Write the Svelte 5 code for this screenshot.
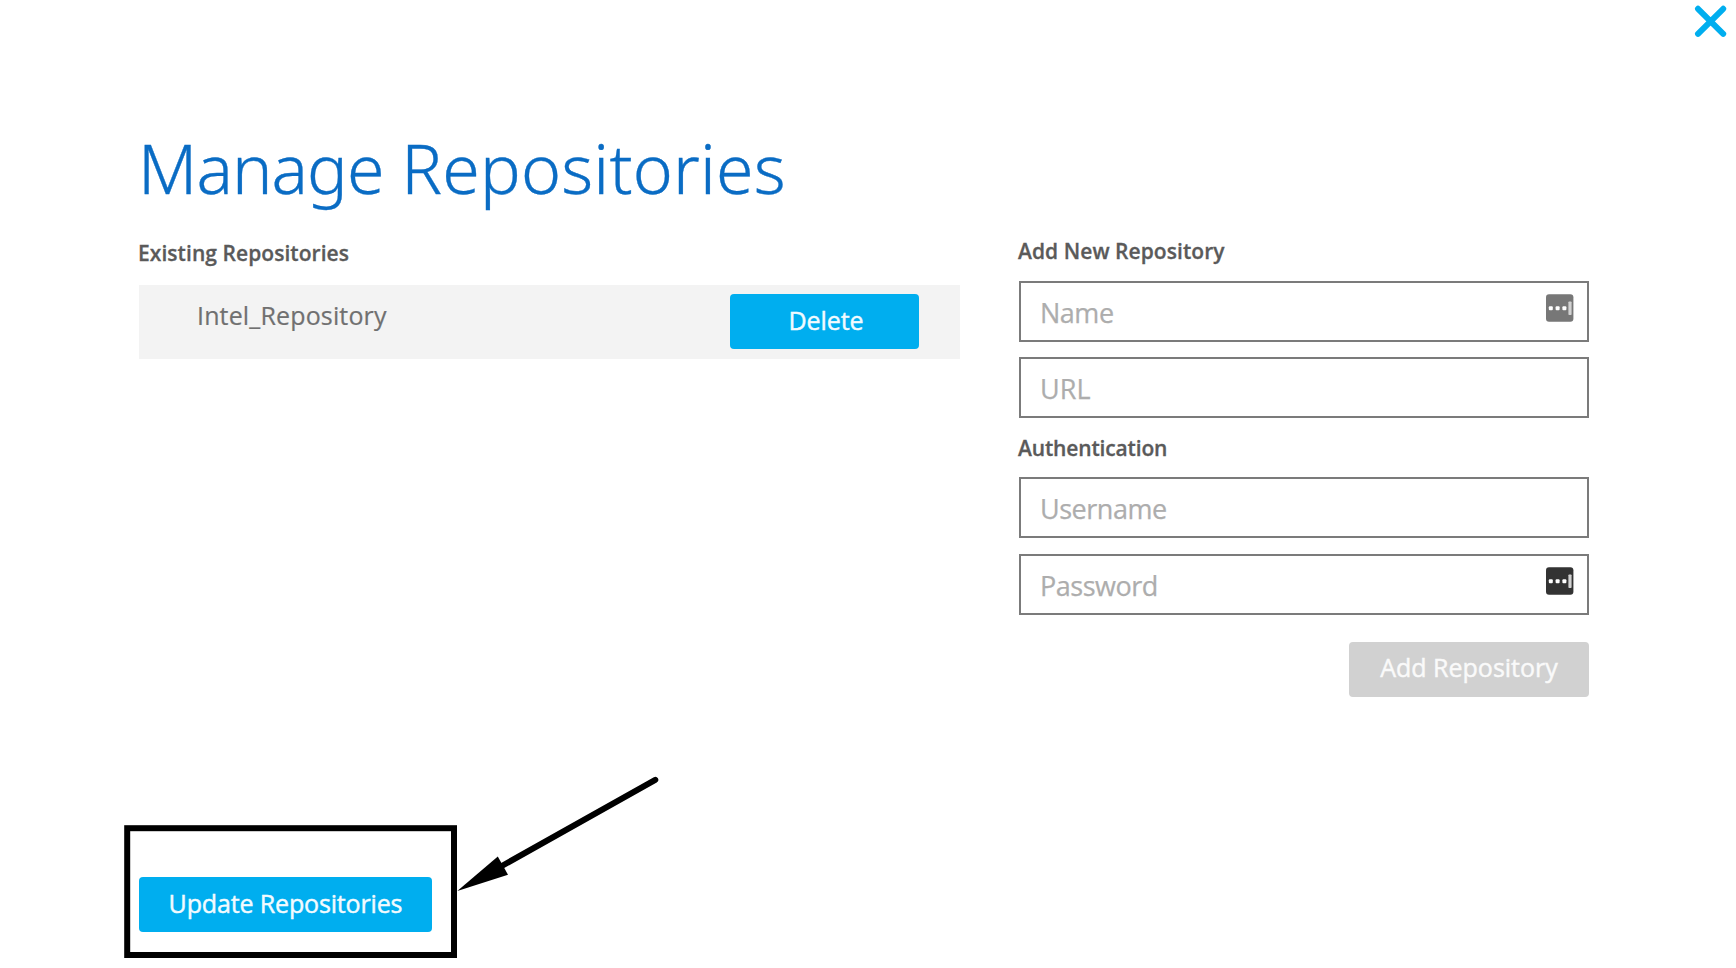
<script>
  let name = $state('');
  let url = $state('');
  let username = $state('');
  let password = $state('');
  const repositories = ['Intel_Repository'];
</script>

{#snippet keyIcon(color)}
  <svg class="key" width="28" height="28" viewBox="0 0 28 28" aria-hidden="true">
    <rect x="0" y="0.3" width="27.4" height="27.4" rx="3" fill={color} />
    <rect x="2.8" y="12.2" width="4" height="4" rx="1" fill="#fff" />
    <rect x="9.6" y="12.2" width="4" height="4" rx="1" fill="#fff" />
    <rect x="16.4" y="12.2" width="4" height="4" rx="1" fill="#fff" />
    <rect x="22.4" y="7.4" width="3.2" height="13.6" rx="0.8" fill="#d2d2d2" />
  </svg>
{/snippet}

<main class="dialog">
  <button class="close" aria-label="Close">
    <svg width="34" height="34" viewBox="0 0 34 34">
      <path d="M4 4.8 29.2 29.8M29.2 4.8 4 29.8" stroke="#00aeef" stroke-width="6" stroke-linecap="round" />
    </svg>
  </button>

  <h1><span class="first">Manage</span> <span class="rest">Repositories</span></h1>

  <div class="columns">
    <section class="existing">
      <h2>Existing Repositories</h2>
      {#each repositories as repo}
        <div class="row">
          <span class="repo">{repo}</span>
          <button class="btn delete">Delete</button>
        </div>
      {/each}
      <button class="btn update">Update Repositories</button>
    </section>

    <form class="add">
      <h2>Add New Repository</h2>
      <div class="field">
        <input placeholder="Name" bind:value={name} />
        {@render keyIcon('#777')}
      </div>
      <div class="field second">
        <input class="wide" placeholder="URL" bind:value={url} />
      </div>
      <h2 class="auth">Authentication</h2>
      <div class="field third">
        <input placeholder="Username" bind:value={username} />
      </div>
      <div class="field last">
        <input type="password" placeholder="Password" bind:value={password} />
        {@render keyIcon('#333')}
      </div>
      <button class="btn submit" type="button" disabled>Add Repository</button>
    </form>
  </div>

  <svg class="callout" width="1736" height="968" viewBox="0 0 1736 968" aria-hidden="true">
    <rect x="127.2" y="828.2" width="326.8" height="126.8" fill="none" stroke="#000" stroke-width="6" />
    <path d="M655.3 779.8 500 867" stroke="#000" stroke-width="6" stroke-linecap="round" />
    <path d="M457.3 891 497.8 856.5 508 874.8Z" fill="#000" />
  </svg>
</main>

<style>
  :global(body) {
    margin: 0;
    background: #fff;
  }
  .dialog {
    position: relative;
    display: flex;
    flex-direction: column;
    box-sizing: border-box;
    width: 1736px;
    height: 968px;
    overflow: hidden;
    padding-left: 139px;
    font-family: 'Open Sans', 'Noto Sans', sans-serif;
    color: #555;
  }
  button {
    border: 0;
    margin: 0;
    font-family: inherit;
  }
  .close {
    align-self: flex-end;
    margin: 4px 8px 0 0;
    padding: 0;
    width: 34px;
    height: 34px;
    background: none;
  }
  .close svg {
    display: block;
  }
  h1 {
    margin: 90px 0 0 -1px;
    font-family: 'Noto Sans', 'Open Sans', sans-serif;
    font-size: 68px;
    line-height: 80px;
    font-weight: 300;
    color: #0a6cc4;
    -webkit-text-stroke: 0.35px #0a6cc4;
  }
  .first {
    letter-spacing: -0.9px;
  }
  .rest {
    letter-spacing: 0.2px;
  }
  .columns {
    display: flex;
    justify-content: space-between;
    width: 1450px;
    flex: 1;
  }
  .existing {
    display: flex;
    flex-direction: column;
    width: 821px;
  }
  .add {
    display: flex;
    flex-direction: column;
    width: 570px;
  }
  h2 {
    margin: 0 0 0 -1px;
    font-size: 21px;
    line-height: 30px;
    font-weight: 600;
    letter-spacing: 0.06px;
    color: #5a5a5a;
    -webkit-text-stroke: 0.3px #5a5a5a;
  }
  .existing h2 {
    margin-top: 30px;
    margin-bottom: 17px;
  }
  .add h2 {
    margin-top: 28px;
    margin-bottom: 15px;
  }
  .add .auth {
    margin-top: 15px;
    margin-bottom: 14px;
    letter-spacing: -0.15px;
  }
  .row {
    display: flex;
    justify-content: space-between;
    box-sizing: border-box;
    height: 74px;
    padding: 9px 41px 0 58px;
    background: #f3f3f3;
  }
  .repo {
    font-size: 25px;
    line-height: 42px;
    letter-spacing: 0.15px;
    color: #707070;
    -webkit-text-stroke: 0.2px #707070;
  }
  .btn {
    box-sizing: border-box;
    height: 55px;
    border-radius: 4px;
    padding: 0 0 4px;
    font-size: 25px;
    line-height: 34px;
    background: #00aeef;
    color: #f2fbff;
    -webkit-text-stroke: 0.45px currentColor;
  }
  .delete {
    width: 189px;
    padding-left: 3px;
    padding-bottom: 3px;
    letter-spacing: -0.1px;
  }
  .update {
    width: 293px;
    margin-top: 518px;
    letter-spacing: -0.15px;
  }
  .field {
    display: flex;
    box-sizing: border-box;
    height: 61px;
    border: 2px solid #7b7b7b;
    background: #fff;
  }
  .second {
    margin-top: 15px;
  }
  .last {
    margin-top: 16px;
  }
  input {
    flex: 1;
    min-width: 0;
    box-sizing: border-box;
    border: 0;
    outline: 0;
    padding: 1px 0 0 19px;
    background: none;
    font-family: inherit;
    font-size: 27px;
    letter-spacing: -0.48px;
    color: #555;
  }
  .wide {
    letter-spacing: 0.1px;
  }
  input::placeholder {
    color: #adadad;
    opacity: 1;
    -webkit-text-stroke: 0.25px #adadad;
  }
  .key {
    margin: 11px 13px 0 0;
  }
  .submit {
    align-self: flex-end;
    width: 240px;
    margin-top: 27px;
    padding-bottom: 5px;
    background: #d1d1d1;
    color: #fafafa;
  }
  .callout {
    position: absolute;
    left: 0;
    top: 0;
    pointer-events: none;
  }
</style>
